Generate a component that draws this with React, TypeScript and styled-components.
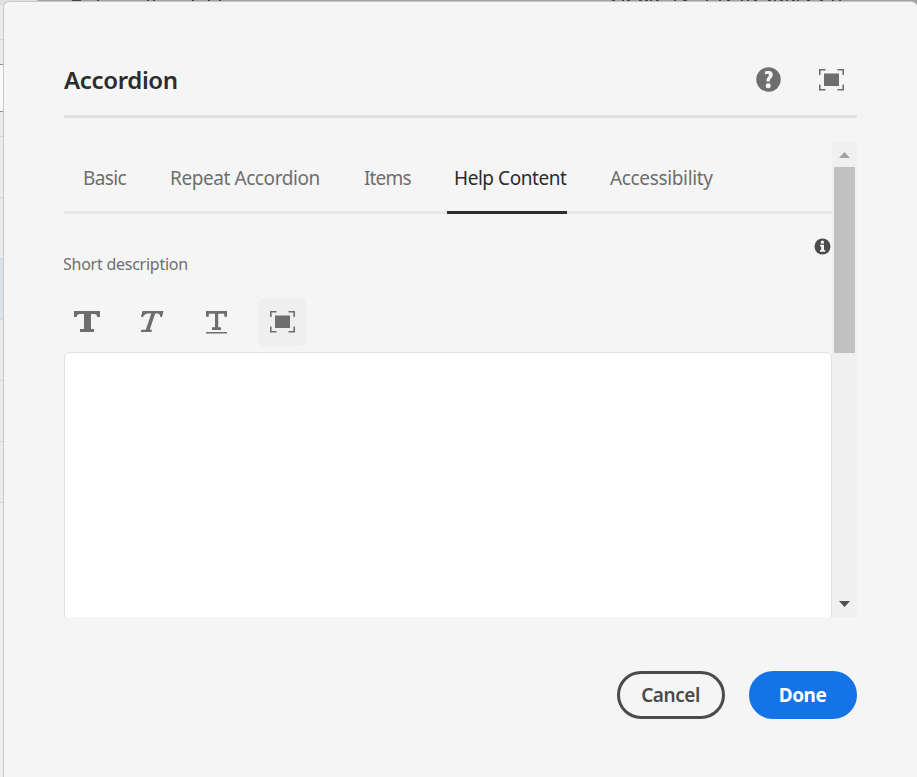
import React from "react";
import styled, { createGlobalStyle } from "styled-components";

const GlobalStyle = createGlobalStyle`
  *, *::before, *::after { box-sizing: border-box; }
  html, body { margin: 0; height: 100%; overflow: hidden; }
  body { background: #f0f0f0; font-family: "Noto Sans", "Open Sans", sans-serif; }
`;

const Page = styled.div`
  position: relative;
  width: 917px;
  height: 777px;
  overflow: hidden;
  background: #ededed;
`;

const Backdrop = styled.div`
  position: absolute;
  inset: 0;
`;

const TopStrip = styled.div`
  display: flex;
  height: 5px;
  background: linear-gradient(90deg, #e0e0e0 0 35px, #d0d0d0 35px 38px, #a2a2a2 38px);
`;

const Fragment = styled.span<{ $gap: number; $width: number; $color?: string }>`
  flex: none;
  margin-left: ${(p) => p.$gap}px;
  width: ${(p) => p.$width}px;
  height: 1px;
  background: ${(p) => p.$color ?? "#444"};
`;

const SideRow = styled.div<{ $height: number; $fill?: string; $line?: string }>`
  width: 4px;
  height: ${(p) => p.$height}px;
  background: ${(p) => p.$fill ?? "#ebebeb"};
  border-bottom: 1px solid ${(p) => p.$line ?? "#d6d6d6"};
`;

const Dialog = styled.section`
  position: relative;
  margin: 1px 0 0 3px;
  width: 914px;
  height: 800px;
  padding: 0 59px 0 60px;
  background: #f5f5f5;
  border: 1px solid #c7c7c7;
  border-right-color: #f5f5f5;
  border-radius: 6px;
`;

const Header = styled.header`
  display: flex;
  align-items: center;
  width: 793px;
  height: 116px;
  border-bottom: 3px solid #e0e0e0;
  padding-top: 42px;
`;

const Title = styled.h1`
  flex: 1;
  margin: 0;
  font-size: 24px;
  line-height: 32px;
  font-weight: 600;
  letter-spacing: -0.35px;
  color: #2c2c2c;
`;

const HeaderActions = styled.div`
  display: flex;
  align-items: center;
  gap: 38px;
  padding-right: 13px;
`;

const IconButton = styled.button`
  display: flex;
  padding: 0;
  border: 0;
  background: none;
  color: #6e6e6e;
`;

const Viewport = styled.div`
  display: flex;
  width: 793px;
  height: 475px;
  margin-top: 24px;
  overflow: hidden;
`;

const Content = styled.div`
  width: 768px;
  flex: none;
`;

const Tabs = styled.nav`
  display: flex;
  height: 72px;
  padding-left: 12px;
  gap: 29px;
  box-shadow: inset 0 -3px 0 #e8e8e8;
`;

const Tab = styled.button<{ $width: number; $spacing: number; $active?: boolean }>`
  width: ${(p) => p.$width}px;
  height: 72px;
  border: 0;
  padding: 0 0 1px 7px;
  background: ${(p) =>
    p.$active ? "linear-gradient(#2c2c2c, #2c2c2c) left bottom / 120px 3px no-repeat" : "none"};
  font: 400 19px/66px "Noto Sans", sans-serif;
  letter-spacing: ${(p) => p.$spacing}px;
  text-align: left;
  white-space: nowrap;
  color: ${(p) => (p.$active ? "#2c2c2c" : "#6e6e6e")};
`;

const FieldHeader = styled.div`
  display: flex;
  justify-content: space-between;
  height: 84px;
  padding: 24px 1px 0 0;
`;

const Label = styled.label`
  margin-left: -1px;
  padding-top: 14px;
  font-size: 16px;
  line-height: 24px;
  letter-spacing: -0.25px;
  color: #6e6e6e;
`;

const Toolbar = styled.div`
  display: flex;
  gap: 17px;
  height: 54px;
  margin-left: -1px;
`;

const Tool = styled.button<{ $raised?: boolean }>`
  display: flex;
  align-items: center;
  justify-content: center;
  width: 48px;
  height: 48px;
  padding: 0;
  border: 0;
  border-radius: 6px;
  background: ${(p) => (p.$raised ? "#efefef" : "transparent")};
  color: #6e6e6e;
`;

const Editor = styled.div`
  height: 400px;
  background: #fff;
  border: 1px solid #e0e0e0;
  border-radius: 6px;
`;

const Scrollbar = styled.div`
  display: flex;
  flex-direction: column;
  align-items: center;
  width: 25px;
  background: #f0f0f0;
`;

const ScrollArrow = styled.div<{ $lift?: number }>`
  display: flex;
  align-items: center;
  justify-content: center;
  width: 25px;
  height: 25px;
  padding-bottom: ${(p) => p.$lift ?? 0}px;
`;

const Thumb = styled.div`
  width: 21px;
  height: 186px;
  margin-bottom: auto;
  background: #c1c1c1;
`;

const Footer = styled.footer`
  display: flex;
  justify-content: flex-end;
  gap: 24px;
  width: 793px;
  margin-top: 54px;
`;

const ActionButton = styled.button<{ $primary?: boolean }>`
  width: 108px;
  height: 48px;
  padding: 0 1px 1px 0;
  border: 3px solid ${(p) => (p.$primary ? "#1473e6" : "#4b4b4b")};
  border-radius: 24px;
  background: ${(p) => (p.$primary ? "#1473e6" : "transparent")};
  color: ${(p) => (p.$primary ? "#fff" : "#4b4b4b")};
  font: ${(p) => (p.$primary ? 700 : 600)} 19px/40px "Noto Sans", sans-serif;
  letter-spacing: ${(p) => (p.$primary ? -0.5 : -0.45)}px;
`;

const HelpIcon = () => (
  <svg width="25" height="25" viewBox="0 0 25 25">
    <circle cx="12.5" cy="12.5" r="12.2" fill="currentColor" />
    <path d="M8.9 4.6c3.4-1.9 7.9-.9 7.9 3 0 3.6-3.3 3.8-3.1 6.8h-3.1c-.6-3.7 2.3-4.2 2.3-6.4 0-1.5-1.8-1.6-4-.5z" fill="#f5f5f5" />
    <circle cx="12.2" cy="18.7" r="2.5" fill="#f5f5f5" />
  </svg>
);

const FullScreenIcon = () => (
  <svg width="25" height="22" viewBox="0 0 25 22">
    <path d="M.8 6V.8H6.5M18.5.8H24.2V6M24.2 15.5V20.7H18.5M6.5 20.7H.8V15.5" fill="none" stroke="currentColor" strokeWidth="1.6" />
    <rect x="5" y="4.5" width="15" height="12.5" fill="currentColor" />
  </svg>
);

const InfoIcon = () => (
  <svg width="17" height="17" viewBox="0 0 17 17">
    <circle cx="8.5" cy="8.5" r="8" fill="#4b4b4b" />
    <circle cx="8.4" cy="4.2" r="1.6" fill="#f5f5f5" />
    <path d="M6 6.8h4v5.2h1.2v1.7H6V12h1.2V8.5H6z" fill="#f5f5f5" />
  </svg>
);

const BoldIcon = () => (
  <svg width="26" height="22" viewBox="0 0 26 22">
    <path d="M0 0H26V6H23.2Q23 3 20 3H17V18H20V21H6V18H10V3H6Q2.8 3 2.7 6H0z" fill="currentColor" />
  </svg>
);

const ItalicIcon = () => (
  <svg width="24" height="22" viewBox="0 0 24 22">
    <path d="M2.4 0H23.5L22 6H20.2Q20.4 2.4 17.5 2.4H15.2L9.7 18.8H12L11.3 21H.7L1.4 18.8H5.8L11.3 2.4H8.2Q4.5 2.4 3 6H1z" fill="currentColor" />
  </svg>
);

const UnderlineIcon = () => (
  <svg width="22" height="24" viewBox="0 0 22 24">
    <path d="M0 1H21V6.7H18.3V3.7H12.2V17.2H15V20H6V17.2H9V3.7H2.8V6.7H0zM0 22H21V23.6H0z" fill="currentColor" />
  </svg>
);

const sideRows = [
  { height: 35 },
  { height: 25, line: "#8f8f8f" },
  { height: 47, fill: "#fafafa", line: "#8f8f8f" },
  { height: 25 },
  { height: 61 },
  { height: 61 },
  { height: 61, fill: "#dbe2eb" },
  { height: 61 },
  { height: 61 },
  { height: 61 },
];

const fragments = [
  { gap: 72, width: 9 },
  { gap: 16, width: 2 },
  { gap: 48, width: 2 },
  { gap: 4, width: 2 },
  { gap: 37, width: 2 },
  { gap: 14, width: 2 },
  { gap: 9, width: 2 },
  { gap: 391, width: 3 },
  { gap: 7, width: 2 },
  { gap: 3, width: 3 },
  { gap: 9, width: 3 },
  { gap: 3, width: 3 },
  { gap: 2, width: 2 },
  { gap: 4, width: 3 },
  { gap: 15, width: 2 },
  { gap: 7, width: 4 },
  { gap: 19, width: 2 },
  { gap: 11, width: 2 },
  { gap: 6, width: 3 },
  { gap: 11, width: 2 },
  { gap: 4, width: 2 },
  { gap: 5, width: 3 },
  { gap: 11, width: 3 },
  { gap: 3, width: 2 },
  { gap: 4, width: 3 },
  { gap: 3, width: 2 },
  { gap: 4, width: 3 },
  { gap: 2, width: 2 },
  { gap: 8, width: 3 },
  { gap: 10, width: 3 },
  { gap: 9, width: 2 },
  { gap: 5, width: 2 },
];

const tabs = [
  { name: "Basic", width: 58, spacing: -0.6 },
  { name: "Repeat Accordion", width: 165, spacing: -0.42 },
  { name: "Items", width: 61, spacing: -0.85 },
  { name: "Help Content", width: 127, spacing: -0.45, active: true },
  { name: "Accessibility", width: 120, spacing: -0.35 },
];

export default function App() {
  return (
    <Page>
      <GlobalStyle />
      <Backdrop>
        <TopStrip>
          {fragments.map((f, i) => (
            <Fragment key={i} $gap={f.gap} $width={f.width} />
          ))}
        </TopStrip>
        {sideRows.map((r, i) => (
          <SideRow key={i} $height={r.height} $fill={r.fill} $line={r.line} />
        ))}
      </Backdrop>
      <Dialog role="dialog" aria-label="Accordion">
        <Header>
          <Title>Accordion</Title>
          <HeaderActions>
            <IconButton aria-label="Help"><HelpIcon /></IconButton>
            <IconButton aria-label="Toggle fullscreen"><FullScreenIcon /></IconButton>
          </HeaderActions>
        </Header>
        <Viewport>
          <Content>
            <Tabs>
              {tabs.map((t) => (
                <Tab key={t.name} $width={t.width} $spacing={t.spacing} $active={t.active}>
                  {t.name}
                </Tab>
              ))}
            </Tabs>
            <FieldHeader>
              <Label>Short description</Label>
              <InfoIcon />
            </FieldHeader>
            <Toolbar>
              <Tool aria-label="Bold"><BoldIcon /></Tool>
              <Tool aria-label="Italic"><ItalicIcon /></Tool>
              <Tool aria-label="Underline"><UnderlineIcon /></Tool>
              <Tool aria-label="Fullscreen" $raised><FullScreenIcon /></Tool>
            </Toolbar>
            <Editor />
          </Content>
          <Scrollbar>
            <ScrollArrow>
              <svg width="11" height="6" viewBox="0 0 11 6"><path d="M0 6L5.5 0L11 6z" fill="#a3a3a3" /></svg>
            </ScrollArrow>
            <Thumb />
            <ScrollArrow $lift={2}>
              <svg width="11" height="6" viewBox="0 0 11 6"><path d="M0 0H11L5.5 6z" fill="#505050" /></svg>
            </ScrollArrow>
          </Scrollbar>
        </Viewport>
        <Footer>
          <ActionButton>Cancel</ActionButton>
          <ActionButton $primary>Done</ActionButton>
        </Footer>
      </Dialog>
    </Page>
  );
}
